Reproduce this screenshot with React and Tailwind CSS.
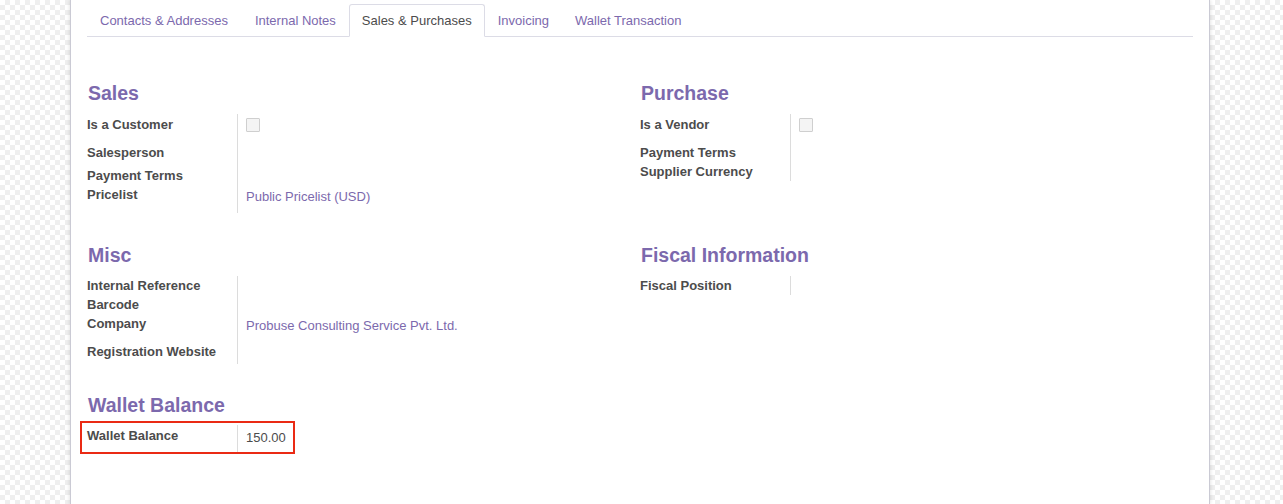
const tabs = ['Contacts & Addresses', 'Internal Notes', 'Sales & Purchases', 'Invoicing', 'Wallet Transaction'];

const Checkbox = () => (
    <span className="block w-[14px] h-[14px] border border-[#cfcfcf] bg-[#f4f4f4] rounded-[1px]" />
);

// one label/value row of a form group
const Row = ({ label, h, pt = 0, vpt = 0, children }) => (
    <div className="flex" style={{ height: h }}>
        <div className="w-[151px] shrink-0 border-r border-[#dcdcdc] font-bold text-[#4c4c4c]" style={{ paddingTop: pt + 1 }}>
            {label}
        </div>
        <div className="pl-[8px] text-[#4c4c4c]" style={{ paddingTop: vpt + 1 }}>
            {children}
        </div>
    </div>
);

const Heading = ({ children }) => (
    <h2 className="h-[24px] leading-[24px] text-[19.5px] font-bold text-[#7c69ad] pl-[1px] mb-[9px]">{children}</h2>
);

const Link = ({ children }) => <span className="text-[#7c69ad]">{children}</span>;

const App = () => {
    return (
        <div className="min-h-[504px] bg-[repeating-conic-gradient(#efefef_0%_25%,#ffffff_0%_50%)] bg-size-[10px_10px] font-['Liberation_Sans',Arial,sans-serif] text-[13px] leading-[18px]">
            <div className="ml-[70px] w-[1140px] min-h-[504px] bg-white border-x border-[#cacad4] shadow-[0_0_4px_rgba(0,0,0,0.15)] px-[16px] pt-[4px]">
                <ul className="flex border-b border-[#dcdce6] h-[33px]">
                    {tabs.map((t, i) => {
                        const active = t === 'Sales & Purchases';
                        return (
                            <li
                                key={t}
                                className={
                                    active
                                        ? 'px-[12px] h-[33px] pt-[1px] flex items-center border border-[#dcdce6] border-b-white bg-white rounded-t-[3px] text-[#4c4c4c]'
                                        : i === 0
                                          ? 'px-[13px] mr-[1px] h-[32px] pt-[2px] flex items-center text-[#7c69ad]'
                                          : 'px-[13px] h-[32px] pt-[2px] flex items-center text-[#7c69ad]'
                                }
                            >
                                {t}
                            </li>
                        );
                    })}
                </ul>

                <div className="grid grid-cols-2 mt-[44px]">
                    <div>
                        <Heading>Sales</Heading>
                        <Row label="Is a Customer" h={28} pt={1} vpt={3}>
                            <Checkbox />
                        </Row>
                        <Row label="Salesperson" h={22} pt={1} />
                        <Row label="Payment Terms" h={21} pt={2} />
                        <Row label="Pricelist" h={28} pt={0} vpt={2}>
                            <Link>Public Pricelist (USD)</Link>
                        </Row>
                    </div>
                    <div>
                        <Heading>Purchase</Heading>
                        <Row label="Is a Vendor" h={28} pt={1} vpt={3}>
                            <Checkbox />
                        </Row>
                        <Row label="Payment Terms" h={20} pt={1} />
                        <Row label="Supplier Currency" h={19} pt={0} />
                    </div>
                </div>

                <div className="grid grid-cols-2 mt-[30px]">
                    <div>
                        <Heading>Misc</Heading>
                        <Row label="Internal Reference" h={19} />
                        <Row label="Barcode" h={19} />
                        <Row label="Company" h={28} vpt={2}>
                            <Link>Probuse Consulting Service Pvt. Ltd.</Link>
                        </Row>
                        <Row label="Registration Website" h={22} />
                    </div>
                    <div>
                        <Heading>Fiscal Information</Heading>
                        <Row label="Fiscal Position" h={19} />
                    </div>
                </div>

                <div className="mt-[29px]">
                    <h2 className="h-[24px] leading-[24px] text-[19.5px] font-bold text-[#7c69ad] pl-[1px]">Wallet Balance</h2>
                    <div className="mt-[4px] -ml-[7px] w-[215px] h-[33px] border-2 border-[#ea2a14] pl-[5px] pt-[2px]">
                        <div className="flex h-[27px]">
                            <div className="w-[151px] shrink-0 border-r border-[#dcdcdc] font-bold text-[#4c4c4c] pt-[2px]">
                                Wallet Balance
                            </div>
                            <div className="pl-[8px] pt-[4px] text-[#4c4c4c]">150.00</div>
                        </div>
                    </div>
                </div>
            </div>
        </div>
    );
};

export default App;
